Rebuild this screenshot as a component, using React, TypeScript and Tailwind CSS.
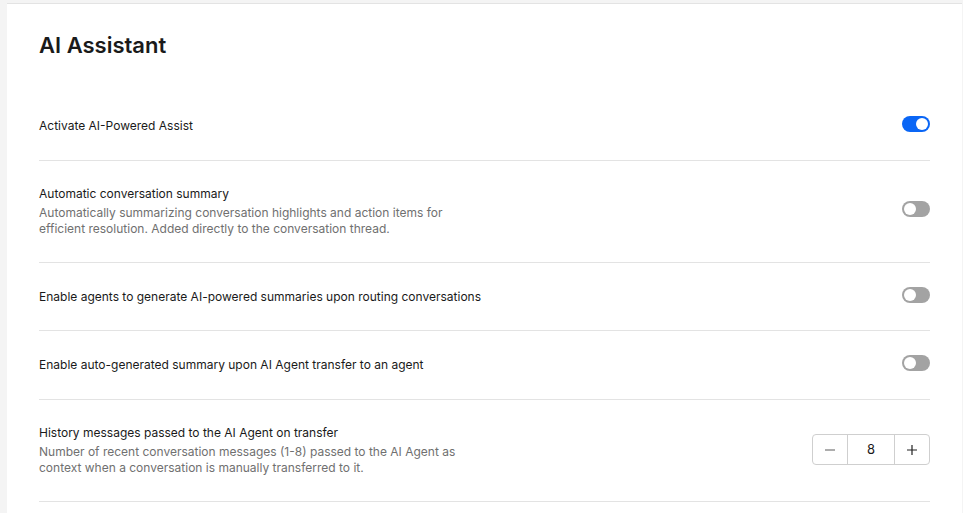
import { useState } from "react";

function Toggle({ on, onChange }: { on: boolean; onChange: () => void }) {
  return (
    <button
      onClick={onChange}
      className={
        "relative w-[28px] h-[16px] mb-[4px] rounded-full flex-shrink-0 " +
        (on ? "bg-[#0a66f5]" : "bg-[#a3a3a3]")
      }
    >
      <span
        className={
          "absolute top-[2px] w-[12px] h-[12px] rounded-full bg-white " +
          (on ? "left-[14px]" : "left-[2px]")
        }
      />
    </button>
  );
}

interface Row {
  title: string;
  desc?: string;
  key: string;
}

const rows: Row[] = [
  { key: "assist", title: "Activate AI-Powered Assist" },
  {
    key: "summary",
    title: "Automatic conversation summary",
    desc: "Automatically summarizing conversation highlights and action items for efficient resolution. Added directly to the conversation thread.",
  },
  { key: "routing", title: "Enable agents to generate AI-powered summaries upon routing conversations" },
  { key: "transfer", title: "Enable auto-generated summary upon AI Agent transfer to an agent" },
];

export default function App() {
  const [toggles, setToggles] = useState<Record<string, boolean>>({
    assist: true,
    summary: false,
    routing: false,
    transfer: false,
  });
  const [count, setCount] = useState(8);

  return (
    <div
      className="w-[963px] h-[513px] bg-[#f4f4f4] pl-[7px] pr-[1px] pt-[3px] overflow-hidden"
      style={{ fontFamily: "Inter, 'Noto Sans', sans-serif" }}
    >
      <div className="bg-white h-full border-t border-[#e3e3e3] px-[32px] pt-[27px]">
        <h1 className="text-[22px] leading-[28px] font-semibold text-[#1a1a1a]">AI Assistant</h1>

        <div className="mt-[33px]">
          {rows.map((r) =>
            r.desc ? (
              <div
                key={r.key}
                className="flex items-center justify-between border-b border-[#e3e3e3] pt-[24px] pb-[25px]"
              >
                <div className="w-[430px]">
                  <div className="text-[12px] leading-[18px] text-[#1a1a1a]">{r.title}</div>
                  <div className="text-[12px] leading-[16px] text-[#707070] mt-[2px]">{r.desc}</div>
                </div>
                <Toggle
                  on={toggles[r.key]}
                  onChange={() => setToggles({ ...toggles, [r.key]: !toggles[r.key] })}
                />
              </div>
            ) : (
              <div
                key={r.key}
                className="flex items-center justify-between border-b border-[#e3e3e3] pt-[24px] pb-[23.5px]"
              >
                <div className="text-[12px] leading-[20px] text-[#1a1a1a]">{r.title}</div>
                <Toggle
                  on={toggles[r.key]}
                  onChange={() => setToggles({ ...toggles, [r.key]: !toggles[r.key] })}
                />
              </div>
            )
          )}

          <div className="flex items-center justify-between border-b border-[#e3e3e3] pt-[24px] pb-[25px]">
            <div className="w-[430px]">
              <div className="text-[12px] leading-[18px] text-[#1a1a1a]">
                History messages passed to the AI Agent on transfer
              </div>
              <div className="text-[12px] leading-[16px] text-[#707070] mt-[2px]">
                Number of recent conversation messages (1-8) passed to the AI Agent as context when a
                conversation is manually transferred to it.
              </div>
            </div>
            <div className="flex h-[31px] w-[118px] border border-[#cfcfcf] rounded-[4px] text-[#1a1a1a]">
              <button
                onClick={() => setCount(Math.max(1, count - 1))}
                className="w-[35px] flex items-center justify-center border-r border-[#cfcfcf]"
              >
                <svg width="12" height="12" viewBox="0 0 12 12">
                  <path d="M1 6h10" stroke="#777" strokeWidth="1.2" />
                </svg>
              </button>
              <div className="flex-1 flex items-center justify-center text-[13px]">{count}</div>
              <button
                onClick={() => setCount(Math.min(8, count + 1))}
                className="w-[35px] flex items-center justify-center border-l border-[#cfcfcf]"
              >
                <svg width="12" height="12" viewBox="0 0 12 12">
                  <path d="M1 6h10M6 1v10" stroke="#222" strokeWidth="1.2" />
                </svg>
              </button>
            </div>
          </div>
        </div>
      </div>
    </div>
  );
}
